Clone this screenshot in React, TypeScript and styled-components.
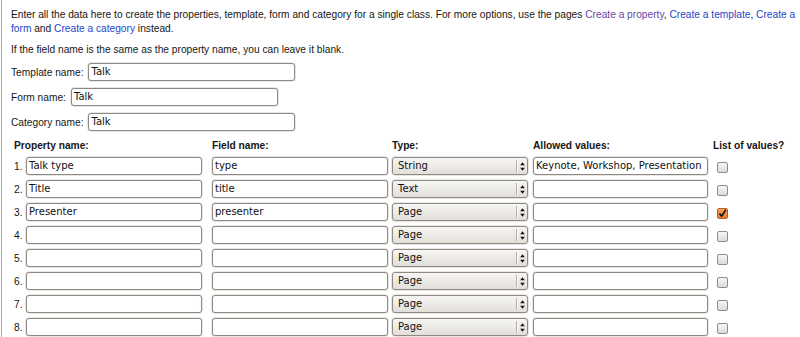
import React from "react";
import styled, { createGlobalStyle } from "styled-components";

const Global = createGlobalStyle`
  html, body { margin: 0; padding: 0; background: #fff; }
  body { font-family: "Liberation Sans", Arial, sans-serif; font-size: 10.2px; color: #161616; }
`;

const Page = styled.div`
  margin-left: 1px;
  border-left: 1px solid #aaa;
  min-height: 337px;
  box-sizing: border-box;
  padding: 8px 2px 0 9px;
`;

const Para = styled.p<{ $mb?: number }>`
  margin: 0 0 ${(p) => p.$mb ?? 7}px 0;
  line-height: 14px;
  font-size: 10.2px;
`;

const Link = styled.a<{ $visited?: boolean }>`
  color: ${(p) => (p.$visited ? "#6a46a6" : "#2346c8")};
  text-decoration: none;
`;

const NameRow = styled.div`
  display: flex;
  align-items: center;
  height: 18px;
  margin-top: 6px;
  & + & { margin-top: 7px; }
`;

const Label = styled.span`
  margin-right: 5px;
  line-height: 13px;
`;

const TextField = styled.div<{ $w: number }>`
  width: ${(p) => p.$w}px;
  height: 18px;
  box-sizing: border-box;
  border: 1px solid #8e8982;
  box-shadow: 0 0 0 0.5px #d4d0ca;
  border-radius: 3px;
  background: #fff;
  padding: 0 2px;
  font-family: "DejaVu Sans", sans-serif;
  font-size: 10px;
  line-height: 16px;
  color: #111;
  white-space: nowrap;
  overflow: hidden;
`;

const Grid = styled.div`
  display: grid;
  grid-template-columns: 198px 180px 141px 180px auto;
  row-gap: 5px;
  align-items: center;
  margin: 8px 0 0 3px;
`;

const Head = styled.div`
  font-weight: bold;
  line-height: 13px;
  height: 13px;
  white-space: nowrap;
`;

const FirstCell = styled.div`
  display: flex;
  align-items: center;
`;

const Num = styled.span`
  width: 12px;
  line-height: 13px;
`;

const Select = styled.div`
  width: 136px;
  height: 18px;
  box-sizing: border-box;
  border: 1px solid #8e8982;
  box-shadow: 0 0 0 0.5px #d4d0ca;
  border-radius: 3px;
  background: linear-gradient(#f7f6f4, #e2dfda);
  display: flex;
  align-items: stretch;
  font-family: "DejaVu Sans", sans-serif;
  font-size: 10px;
  color: #111;
`;

const SelectText = styled.span`
  flex: 1;
  padding-left: 5px;
  line-height: 16px;
`;

const SelectArrow = styled.span`
  width: 10px;
  border-left: 1px solid #b3aea6;
  box-shadow: inset 1px 0 0 #fbfaf8;
  margin: 2px 0;
  display: flex;
  align-items: center;
  justify-content: center;
`;

const Check = styled.span<{ $on?: boolean }>`
  display: block;
  width: 11px;
  height: 11px;
  box-sizing: border-box;
  margin: 2px 0 0 4px;
  border-radius: 2px;
  border: 1px solid ${(p) => (p.$on ? "#b0602a" : "#8f8d8a")};
  background: ${(p) =>
    p.$on ? "linear-gradient(#f8a05a, #ef7b26)" : "linear-gradient(#f6f6f5, #dddbd8)"};
  position: relative;
`;

const Arrows = () => (
  <svg width="5" height="9" viewBox="0 0 5 9">
    <path d="M2.5 0.3 L4.8 3.3 L0.2 3.3 Z" fill="#111" />
    <path d="M2.5 8.7 L4.8 5.7 L0.2 5.7 Z" fill="#111" />
  </svg>
);

const Tick = () => (
  <svg width="9" height="9" viewBox="0 0 9 9" style={{ position: "absolute", left: 0, top: 0 }}>
    <path d="M1.5 4.5 L3.6 7.2 L7.8 0.8" stroke="#111" strokeWidth="1.6" fill="none" />
  </svg>
);

type Row = { prop: string; field: string; type: string; allowed: string; list: boolean };

const rows: Row[] = [
  { prop: "Talk type", field: "type", type: "String", allowed: "Keynote, Workshop, Presentation", list: false },
  { prop: "Title", field: "title", type: "Text", allowed: "", list: false },
  { prop: "Presenter", field: "presenter", type: "Page", allowed: "", list: true },
  { prop: "", field: "", type: "Page", allowed: "", list: false },
  { prop: "", field: "", type: "Page", allowed: "", list: false },
  { prop: "", field: "", type: "Page", allowed: "", list: false },
  { prop: "", field: "", type: "Page", allowed: "", list: false },
  { prop: "", field: "", type: "Page", allowed: "", list: false },
];

export default function App() {
  return (
    <>
      <Global />
      <Page>
        <Para>
          Enter all the data here to create the properties, template, form and category for a single class. For more
          options, use the pages <Link $visited>Create a property</Link>, <Link>Create a template</Link>,{" "}
          <Link>Create a form</Link> and <Link>Create a category</Link> instead.
        </Para>
        <Para $mb={0}>If the field name is the same as the property name, you can leave it blank.</Para>
        <NameRow>
          <Label>Template name:</Label>
          <TextField $w={207}>Talk</TextField>
        </NameRow>
        <NameRow>
          <Label>Form name:</Label>
          <TextField $w={207}>Talk</TextField>
        </NameRow>
        <NameRow>
          <Label>Category name:</Label>
          <TextField $w={207}>Talk</TextField>
        </NameRow>
        <Grid>
          <Head>Property name:</Head>
          <Head>Field name:</Head>
          <Head>Type:</Head>
          <Head>Allowed values:</Head>
          <Head>List of values?</Head>
          {rows.map((r, i) => (
            <React.Fragment key={i}>
              <FirstCell>
                <Num>{i + 1}.</Num>
                <TextField $w={176}>{r.prop}</TextField>
              </FirstCell>
              <TextField $w={176}>{r.field}</TextField>
              <Select>
                <SelectText>{r.type}</SelectText>
                <SelectArrow>
                  <Arrows />
                </SelectArrow>
              </Select>
              <TextField $w={175}>{r.allowed}</TextField>
              <div>
                <Check $on={r.list}>{r.list && <Tick />}</Check>
              </div>
            </React.Fragment>
          ))}
        </Grid>
      </Page>
    </>
  );
}
